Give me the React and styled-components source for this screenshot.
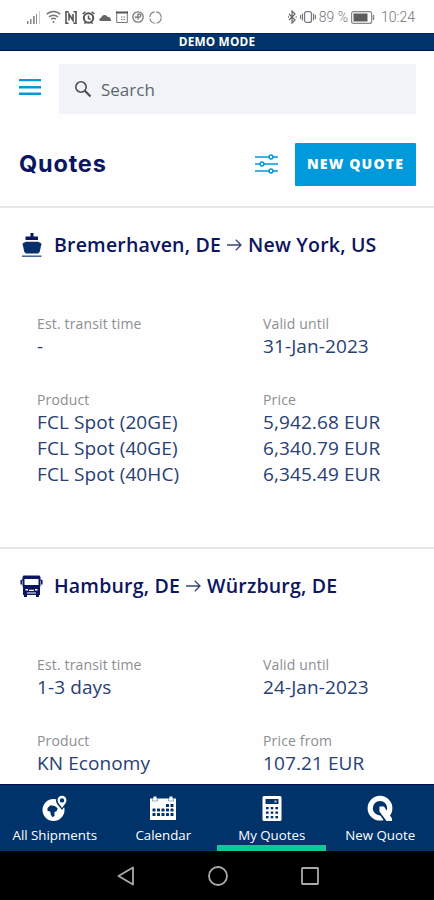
import React from "react";
import styled, { createGlobalStyle } from "styled-components";

const navy = "#0b1560";
const blue = "#003369";
const sky = "#0099da";

const GlobalStyle = createGlobalStyle`
  *, *::before, *::after { box-sizing: border-box; }
  html, body { margin: 0; padding: 0; background: #fefefe; }
  body { font-family: "Open Sans", "Noto Sans", sans-serif; }
  svg { display: block; flex: none; }
`;

const Screen = styled.div`
  width: 434px;
  height: 900px;
  display: flex;
  flex-direction: column;
  overflow: hidden;
  background: #fefefe;
`;

const StatusBar = styled.div`
  height: 33px;
  flex: none;
  display: flex;
  justify-content: space-between;
  align-items: center;
  padding: 1px 19px 0 27px;
  color: #777;
`;

const StatusGroup = styled.div`
  display: flex;
  align-items: center;
  white-space: nowrap;
`;

const LeftIcons = styled(StatusGroup)`
  gap: 4.5px;
`;

const RightIcons = styled(StatusGroup)`
  gap: 3px;
`;

const StatusText = styled.span`
  font: 300 14px/18px "Roboto", sans-serif;
  margin-left: ${(p) => p.$indent || "0"};
`;

const DemoBar = styled.div`
  height: 18px;
  flex: none;
  background: ${blue};
  border-top: 1px solid #00205c;
  border-bottom: 1px solid #00104f;
  color: #fff;
  font-size: 11.8px;
  font-weight: 700;
  line-height: 15px;
  letter-spacing: 0.2px;
  text-align: center;
`;

const SearchRow = styled.div`
  display: flex;
  align-items: center;
  height: 63px;
  flex: none;
  padding: 13px 18px 0 18px;
`;

const MenuButton = styled.button`
  border: 0;
  background: none;
  padding: 0 0 4px;
  margin-right: 17px;
  width: 24px;
`;

const SearchBox = styled.label`
  flex: 1;
  height: 50px;
  display: flex;
  align-items: center;
  padding-left: 15px;
  gap: 9px;
  background: #f0f3f7;
  color: #62666a;
  font-size: 17px;
`;

const Header = styled.header`
  height: 92px;
  flex: none;
  display: flex;
  align-items: center;
  padding: 8px 18px 0 19px;
`;

const Title = styled.h1`
  flex: 1;
  margin: 0;
  color: ${navy};
  font: 700 23.5px/30px "Inter", sans-serif;
  letter-spacing: 0.8px;
`;

const PrimaryButton = styled.button`
  width: 121px;
  height: 43px;
  margin-left: 17px;
  padding: 0;
  border: 0;
  border-radius: 1px;
  background: ${sky};
  color: #fff;
  font: 800 14px/20px "Open Sans", sans-serif;
  letter-spacing: 1.2px;
  white-space: nowrap;
`;

const Content = styled.main`
  flex: 1;
  min-height: 0;
  overflow: hidden;
`;

const Card = styled.section`
  height: 341px;
  border-top: 2px solid #e6e7e8;
  padding: 24px 18px 0 20px;
`;

const Route = styled.h2`
  height: 26px;
  margin: 0 0 56px;
  display: flex;
  align-items: center;
  color: ${navy};
  font-size: 19.5px;
  font-weight: 600;
  line-height: 26px;
  letter-spacing: 0.2px;
  white-space: nowrap;
`;

const RouteIcon = styled.span`
  width: 34px;
`;

const Arrow = styled.span`
  margin: 0 6px;
`;

const Details = styled.div`
  display: grid;
  grid-template-columns: 226px 1fr;
  row-gap: 31px;
  padding-left: 17px;
`;

const Label = styled.div`
  height: 19px;
  color: #8c8e92;
  font-size: 14px;
  line-height: 20px;
  letter-spacing: 0.15px;
`;

const Value = styled.div`
  color: #284172;
  font-size: 19px;
  line-height: 26px;
  letter-spacing: 0.1px;
  white-space: nowrap;
`;

const BottomNav = styled.nav`
  height: 67px;
  flex: none;
  display: grid;
  grid-template-columns: repeat(4, 1fr);
  background: ${blue};
  border-top: 1px solid #00104f;
`;

const NavItem = styled.a`
  display: flex;
  flex-direction: column;
  align-items: center;
  padding: 10px 0 0 1px;
  color: #fff;
  font-size: 13.3px;
  font-weight: 500;
  line-height: 18px;
  white-space: nowrap;
  border-bottom: 6px solid ${(p) => (p.$active ? "#10c798" : "transparent")};
`;

const NavLabel = styled.span`
  margin-top: 4px;
`;

const SystemBar = styled.div`
  height: 49px;
  flex: none;
  display: flex;
  justify-content: center;
  align-items: center;
  gap: 72px;
  padding-left: 1px;
  background: #000;
`;

const SignalIcon = () => (
  <svg width="14" height="13" viewBox="0 0 14 13" fill="#888">
    <path d="M0 10h1.5v3H0zM3 8h1.5v5H3zM6 5h1.7v8H6zM9 3h1v10H9z" />
    <path d="M12 0h1v13h-1z" fill="#ccc" />
  </svg>
);

const WifiIcon = () => (
  <svg width="15" height="14" viewBox="0 0 15 14" fill="none" stroke="#777" strokeWidth="1.5">
    <path d="M.7 4.3C4.5.4 10.5.4 14.3 4.3M3 7c2.5-2.5 6.5-2.5 9 0M5.2 9.3c1.3-1.3 3.3-1.3 4.6 0" />
    <circle cx="7.5" cy="12" r="1" fill="#777" stroke="none" />
  </svg>
);

const NfcIcon = () => (
  <svg width="12" height="13" viewBox="0 0 12 13" fill="none" stroke="#555" strokeWidth="1.6">
    <path d="M3.5.8H1v11.4h2.5M8.5.8H11v11.4H8.5M4 9.5V3l4 6.5V3" />
  </svg>
);

const AlarmIcon = () => (
  <svg width="13" height="13" viewBox="0 0 13 13" fill="none" stroke="#555" strokeWidth="1.5">
    <circle cx="6.5" cy="7" r="4.7" strokeWidth="2" />
    <path d="M.7 3 3.3.7M12.3 3 9.7.7M6.5 4.5V7.3L8.5 8.5M2.5 12.7l1.2-1.5M10.5 12.7l-1.2-1.5" />
  </svg>
);

const CloudIcon = () => (
  <svg width="12" height="7" viewBox="0 0 12 7" fill="#666">
    <path d="M1.5 7C-.3 6.3 0 4 2 3.9 2.8.5 7 0 8.3 2.8 10.6 2.7 12 4.2 12 7z" />
  </svg>
);

const WindowIcon = () => (
  <svg width="12" height="12" viewBox="0 0 12 12" fill="none" stroke="#777">
    <path d="M.7.5v11h10.6V.5" />
    <path d="M0 1.5h12" stroke="#555" strokeWidth="2" />
    <path d="M5 6h5M5 8.5h5" strokeDasharray="1.5 1" />
  </svg>
);

const HistoryIcon = () => (
  <svg width="12" height="12" viewBox="0 0 12 12" fill="none" stroke="#777" strokeWidth="1.3">
    <circle cx="6" cy="6" r="5.2" />
    <path d="M6 8.8V3.2h1.3a1.5 1.5 0 0 1 0 3H4M3 5.5l1.2 1.7" />
  </svg>
);

const LoadingIcon = () => (
  <svg width="13" height="13" viewBox="0 0 13 13" fill="none" stroke="#888" strokeWidth="1.2">
    <circle cx="6.5" cy="6.5" r="5.7" strokeDasharray="7.45 1.5" />
  </svg>
);

const BluetoothIcon = () => (
  <svg width="9" height="14" viewBox="0 0 9 14" fill="none" stroke="#666" strokeWidth="1.2">
    <path d="m1 4 6 6-3 3V1l3 3-6 6" />
    <path d="M0 7h1M7.7 7h1" strokeWidth="1.5" />
  </svg>
);

const VibrateIcon = () => (
  <svg width="16" height="12" viewBox="0 0 16 12" fill="none" stroke="#777" strokeWidth="1.2">
    <rect x="4.6" y=".6" width="6.8" height="10.8" rx="2" />
    <path d="M2.5 2.5v7M.6 4v4M13.5 2.5v7M15.4 4v4" />
  </svg>
);

const BatteryIcon = () => (
  <svg width="24" height="13" viewBox="0 0 24 13" fill="none" stroke="#888">
    <rect x=".6" y=".6" width="20" height="11.8" rx="2" strokeWidth="1.2" />
    <rect x="2.5" y="2.5" width="14" height="8" fill="#5d5d5d" stroke="none" />
    <path d="M22.5 4v5" strokeWidth="1.5" />
  </svg>
);

const MenuIcon = () => (
  <svg width="23" height="18" viewBox="0 0 23 18" fill={sky}>
    <path d="M1 1h22v2.2H1zM1 8h22v2.4H1zM1 14.5h22v2.5H1z" />
  </svg>
);

const SearchIcon = () => (
  <svg width="18" height="18" viewBox="0 0 18 18" fill="none" stroke="#4c5053">
    <circle cx="7" cy="7" r="5.2" strokeWidth="1.6" />
    <path d="m10.8 10.8 5.7 5.7" strokeWidth="2.2" />
  </svg>
);

const FilterIcon = () => (
  <svg width="23" height="20" viewBox="0 0 23 20" fill="#fefefe" stroke={sky} strokeWidth="1.5">
    <path d="M0 3h23M0 10h23M0 17h23" />
    <circle cx="16" cy="3" r="1.9" />
    <circle cx="7" cy="10" r="1.9" />
    <circle cx="16" cy="17" r="1.9" />
  </svg>
);

const ShipIcon = () => (
  <svg width="23" height="26" viewBox="0 0 23 26" fill={navy}>
    <path d="M10.5 1h3v3.5H18V8H5.5V4.5h5z" />
    <path d="M2.5 11.5 6 9.8h12l3.5 1.7-1.8 8.5-1.7 1.5H6L4.3 20z" fill="#07306b" />
    <path d="M2 24.2h19.5" stroke="#355680" strokeWidth="1.4" />
  </svg>
);

const TruckIcon = () => (
  <svg width="23" height="23" viewBox="0 0 23 23" fill={navy}>
    <path
      fillRule="evenodd"
      d="M3.5.5h16l1 1.5v9l-.5 1V20h-1v2h-3v-2H7v2H4v-2H3v-8l-.5-1V2zM4.5 4v6h14V4zM5.5 14v1.5H8V14zm9.5 0v1.5h2.5V14zM9 14.8v1.2h5v-1.2zm-2 2.7v1h9v-1z"
    />
    <path d="M1.2 5v4.5M21.8 5v4.5" stroke={navy} strokeWidth="1.5" />
    <path d="M1.5 5h2M19.5 5h2" stroke={navy} strokeWidth="1.2" />
  </svg>
);

const ArrowIcon = () => (
  <svg width="15" height="14" viewBox="0 0 15 14" fill="none" stroke="#354674" strokeWidth="1.3">
    <path d="M0 7h14M8.8 1.8 14 7l-5.2 5.2" />
  </svg>
);

const GlobeIcon = () => (
  <svg width="27" height="27" viewBox="0 0 27 27">
    <circle cx="12.5" cy="15" r="11" fill="#fff" />
    <path d="m6.5 13 3-2.7 4.2.7 3 2.3-.8 2.5-2.5 1.5.2 3.5-2 1.5-1.8-2.5-.5-3-2.8-1z" fill={blue} />
    <path d="M21 15c-3-4-6-6.5-6-9.5a6 6 0 0 1 12 0C27 8.5 24 11 21 15z" fill={blue} />
    <path
      fillRule="evenodd"
      d="M21 13c-2-3.2-4.5-5.2-4.5-7.8a4.5 4.5 0 0 1 9 0C25.5 7.8 23 9.8 21 13zm0-9.8a2.2 2.2 0 1 0 0 4.4 2.2 2.2 0 0 0 0-4.4z"
      fill="#fff"
    />
  </svg>
);

const calendarDots = [
  [16, 8], [20.5, 8],
  [2.5, 12.5], [7, 12.5], [11.5, 12.5], [16, 12.5], [20.5, 12.5],
  [2.5, 17], [7, 17], [11.5, 17], [16, 17], [20.5, 17],
];

const CalendarIcon = () => (
  <svg width="26" height="27" viewBox="0 0 26 27">
    <path d="M0 3.5h3.5V1.5h3v2h13v-2h3v2H26V25H0z" fill="#fff" />
    <path d="M2.5 4v2h5V4M18.5 4v2h5V4" fill="none" stroke={blue} strokeWidth=".4" />
    {calendarDots.map(([x, y]) => (
      <rect key={`${x}-${y}`} x={x} y={y + 1} width="3" height="3" rx=".5" fill={blue} />
    ))}
  </svg>
);

const CalculatorIcon = () => (
  <svg width="20" height="27" viewBox="0 0 20 27" fill={blue}>
    <rect x=".5" y="1" width="19" height="25" rx="1.5" fill="#fff" />
    <rect x="3.5" y="4" width="13" height="5" />
    <path d="M12.5 5.5h2v2h-2z" fill="#bdcad9" />
    {[12, 16.5, 21].map((y) =>
      [4, 8.7, 13.4].map((x) => <rect key={`${x}-${y}`} x={x} y={y} width="2.6" height="2.3" />)
    )}
  </svg>
);

const QuoteIcon = () => (
  <svg width="26" height="27" viewBox="0 0 26 27" fill="none" stroke="#fff">
    <circle cx="13" cy="13.2" r="9.8" strokeWidth="5.2" />
    <path d="M13 15.5 19.5 25" stroke={blue} strokeWidth="5" />
    <path d="M12.5 11.5h4.5L25 23.5V26h-5.5l-7-9.5z" fill="#fff" stroke="none" />
  </svg>
);

const BackIcon = () => (
  <svg width="20" height="22" viewBox="0 0 20 22" fill="none" stroke="#aaa" strokeWidth="1.8">
    <path d="M17 2.5v17L2.5 11z" strokeLinejoin="round" />
  </svg>
);

const HomeIcon = () => (
  <svg width="20" height="20" viewBox="0 0 20 20" fill="none" stroke="#aaa" strokeWidth="1.8">
    <circle cx="10" cy="10" r="9" />
  </svg>
);

const RecentsIcon = () => (
  <svg width="20" height="20" viewBox="0 0 20 20" fill="none" stroke="#aaa" strokeWidth="1.8">
    <rect x="2" y="2" width="16" height="16" rx=".5" />
  </svg>
);

const quotes = [
  {
    from: "Bremerhaven, DE",
    to: "New York, US",
    Icon: ShipIcon,
    fields: [
      ["Est. transit time", ["-"]],
      ["Valid until", ["31-Jan-2023"]],
      ["Product", ["FCL Spot (20GE)", "FCL Spot (40GE)", "FCL Spot (40HC)"]],
      ["Price", ["5,942.68 EUR", "6,340.79 EUR", "6,345.49 EUR"]],
    ],
  },
  {
    from: "Hamburg, DE",
    to: "Würzburg, DE",
    Icon: TruckIcon,
    fields: [
      ["Est. transit time", ["1-3 days"]],
      ["Valid until", ["24-Jan-2023"]],
      ["Product", ["KN Economy"]],
      ["Price from", ["107.21 EUR"]],
    ],
  },
];

const tabs = [
  ["All Shipments", GlobeIcon],
  ["Calendar", CalendarIcon],
  ["My Quotes", CalculatorIcon],
  ["New Quote", QuoteIcon],
];

export default function App() {
  return (
    <Screen>
      <GlobalStyle />
      <StatusBar>
        <LeftIcons>
          <SignalIcon />
          <WifiIcon />
          <NfcIcon />
          <AlarmIcon />
          <CloudIcon />
          <WindowIcon />
          <HistoryIcon />
          <LoadingIcon />
        </LeftIcons>
        <RightIcons>
          <BluetoothIcon />
          <VibrateIcon />
          <StatusText>89 %</StatusText>
          <BatteryIcon />
          <StatusText $indent="3px">10:24</StatusText>
        </RightIcons>
      </StatusBar>
      <DemoBar>DEMO MODE</DemoBar>
      <SearchRow>
        <MenuButton aria-label="Menu">
          <MenuIcon />
        </MenuButton>
        <SearchBox>
          <SearchIcon />
          Search
        </SearchBox>
      </SearchRow>
      <Header>
        <Title>Quotes</Title>
        <FilterIcon />
        <PrimaryButton>NEW QUOTE</PrimaryButton>
      </Header>
      <Content>
        {quotes.map(({ from, to, Icon, fields }) => (
          <Card key={from}>
            <Route>
              <RouteIcon>
                <Icon />
              </RouteIcon>
              {from}
              <Arrow>
                <ArrowIcon />
              </Arrow>
              {to}
            </Route>
            <Details>
              {fields.map(([label, values]) => (
                <div key={label}>
                  <Label>{label}</Label>
                  {values.map((v) => (
                    <Value key={v}>{v}</Value>
                  ))}
                </div>
              ))}
            </Details>
          </Card>
        ))}
      </Content>
      <BottomNav>
        {tabs.map(([label, Icon]) => (
          <NavItem key={label} $active={label === "My Quotes"}>
            <Icon />
            <NavLabel>{label}</NavLabel>
          </NavItem>
        ))}
      </BottomNav>
      <SystemBar>
        <BackIcon />
        <HomeIcon />
        <RecentsIcon />
      </SystemBar>
    </Screen>
  );
}
